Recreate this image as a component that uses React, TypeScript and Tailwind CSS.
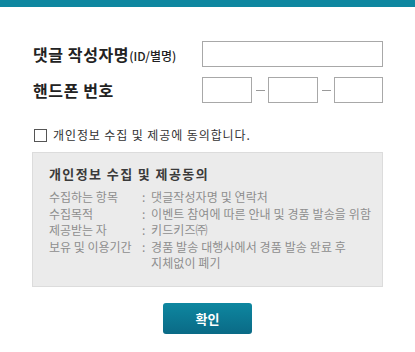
import React from "react";

const KR = { fontFamily: '"Noto Sans CJK KR", "Noto Sans", sans-serif' };

function Dash() {
  return (
    <div className="flex w-[16px] items-center justify-center">
      <div className="h-px w-[9px] bg-[#9a9a9a]" />
    </div>
  );
}

export default function App() {
  const rows: [string, string[]][] = [
    ["수집하는 항목", ["댓글작성자명 및 연락처"]],
    ["수집목적", ["이벤트 참여에 따른 안내 및 경품 발송을 위함"]],
    ["제공받는 자", ["키드키즈㈜"]],
    ["보유 및 이용기간", ["경품 발송 대행사에서 경품 발송 완료 후", "지체없이 폐기"]],
  ];
  return (
    <div className="w-[415px] h-[352px] bg-white" style={KR}>
      <div className="h-[7px] bg-[#0e87a0]" />
      <div className="ml-[32px] w-[351px] pt-[34px]">
        <div className="flex h-[26px] items-center">
          <div className="w-[170px] pl-[1px] flex items-baseline text-[#222]">
            <span className="text-[16px] font-bold tracking-[0.6px]">댓글 작성자명</span>
            <span className="text-[12px] font-medium tracking-[0px]">(ID/별명)</span>
          </div>
          <div className="h-[26px] w-[181px] border border-[#a8a8a8] bg-white" />
        </div>
        <div className="mt-[10px] flex h-[26px] items-center">
          <div className="w-[170px] pl-[1px] text-[16px] font-bold tracking-[0.6px] text-[#222]">
            핸드폰 번호
          </div>
          <div className="h-[26px] w-[50px] border border-[#a8a8a8]" />
          <Dash />
          <div className="h-[26px] w-[50px] border border-[#a8a8a8]" />
          <Dash />
          <div className="h-[26px] w-[49px] border border-[#a8a8a8]" />
        </div>
        <div className="mt-[25px] flex h-[14px] items-center pl-[2px]">
          <div className="h-[13px] w-[13px] border border-[#555] bg-white" />
          <span className="ml-[6px] text-[12px] tracking-[0.9px] text-[#333] leading-[14px]">
            개인정보 수집 및 제공에 동의합니다.
          </span>
        </div>
        <div className="mt-[10px] h-[135px] border border-[#dcdcdc] bg-[#ebebeb] pl-[16px] pt-[12px]">
          <div className="text-[13px] font-bold leading-[18px] tracking-[1.4px] text-[#3a3a3a]">
            개인정보 수집 및 제공동의
          </div>
          <div className="mt-[6px] text-[12px] leading-[16.5px] text-[#8e8e8e]">
            {rows.map(([k, vs]) => (
              <div key={k} className="flex">
                <div className="w-[93px] shrink-0">{k}</div>
                <div className="w-[9px] shrink-0">:</div>
                <div className="tracking-[0.1px]">
                  {vs.map((v) => (
                    <div key={v}>{v}</div>
                  ))}
                </div>
              </div>
            ))}
          </div>
        </div>
      </div>
      <div className="mt-[16px] flex justify-center">
        <button className="h-[31px] w-[89px] rounded-[3px] bg-gradient-to-b from-[#0e87a0] to-[#0a6a86] text-[13px] font-bold text-white">
          확인
        </button>
      </div>
    </div>
  );
}
